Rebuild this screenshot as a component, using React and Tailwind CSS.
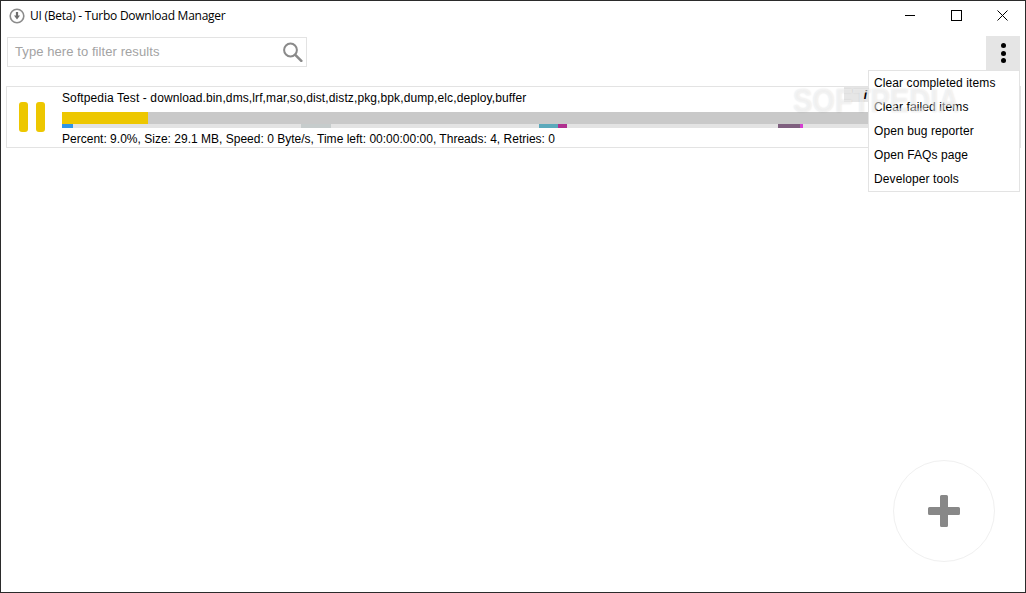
import React from 'react';

const menuItems = ['Clear completed items', 'Clear failed items', 'Open bug reporter', 'Open FAQs page', 'Developer tools'];

const App = () => {
  return (
    <div className="relative w-[1026px] h-[593px] overflow-hidden bg-white border border-[#2b2b2b] font-['Liberation_Sans',sans-serif] text-black">
      {/* title bar */}
      <div className="flex items-center h-[29px] pl-2">
        <svg width="16" height="16" viewBox="0 0 16 16" className="shrink-0">
          <circle cx="8" cy="8" r="6.8" fill="none" stroke="#8c8c8c" strokeWidth="1.6" />
          <path d="M6.9 4h2.2v3.6h1.9L8 11.6 5 7.6h1.9z" fill="#6e6e6e" />
        </svg>
        <span className="ml-[5px] text-xs font-['Open_Sans',sans-serif] tracking-[-0.25px]">UI (Beta) - Turbo Download Manager</span>
        <div className="ml-auto flex items-center h-full">
          <div className="w-[46px] flex justify-center"><div className="w-[10px] h-px bg-black" /></div>
          <div className="w-[46px] flex justify-center"><div className="w-[11px] h-[11px] border border-black" /></div>
          <div className="w-[46px] flex justify-center">
            <svg width="11" height="11" viewBox="0 0 11 11">
              <path d="M.5.5l10 10M10.5.5l-10 10" stroke="#000" strokeWidth="1" fill="none" />
            </svg>
          </div>
        </div>
      </div>

      {/* toolbar */}
      <div className="flex items-start justify-between h-[56px] pl-[6px] pr-[5px] pt-[7px]">
        <div className="flex items-center justify-between w-[300px] h-[30px] border border-[#e3e3e3] pl-[7px] pr-[3px]">
          <span className="text-[13px] tracking-[0.08px] text-[#a3a3a3]">Type here to filter results</span>
          <svg width="20" height="20" viewBox="0 0 20 20" fill="none" stroke="#8a8a8a">
            <circle cx="7.5" cy="8" r="6.4" strokeWidth="2" />
            <path d="M12.3 12.8l6 6" strokeWidth="2.6" strokeLinecap="round" />
          </svg>
        </div>
        <div className="flex flex-col items-center justify-center gap-[2.5px] w-[34px] h-[34px] -mt-px bg-[#e5e5e5]">
          <div className="w-[5px] h-[5px] rounded-full bg-black" />
          <div className="w-[5px] h-[5px] rounded-full bg-black" />
          <div className="w-[5px] h-[5px] rounded-full bg-black" />
        </div>
      </div>

      {/* download item */}
      <div className="relative flex ml-[5px] mr-[4px] h-[62px] border border-[#e3e3e3]">
        <div className="flex items-center gap-2 w-[55px] pl-3 shrink-0">
          <div className="w-[9px] h-[30px] rounded-[3px] bg-[#edc700]" />
          <div className="w-[9px] h-[30px] rounded-[3px] bg-[#edc700]" />
        </div>
        <div className="flex-1 flex flex-col min-w-0 pt-[4px]">
          <div className="text-xs tracking-[0.11px] leading-[14px] h-[21px]">Softpedia Test - download.bin,dms,lrf,mar,so,dist,distz,pkg,bpk,dump,elc,deploy,buffer</div>
          <div className="flex h-3 bg-[#c9c9c9]">
            <div className="w-[86px] bg-[#edc700]" />
          </div>
          <div className="flex h-1 bg-[#e3e3e3]">
            <div className="w-[11px] bg-[#2f96e8]" />
            <div className="w-[228px]" />
            <div className="w-[30px] bg-[#c6cccc]" />
            <div className="w-[208px]" />
            <div className="w-[19px] bg-[#5ba9bb]" />
            <div className="w-[9px] bg-[#b0308f]" />
            <div className="w-[211px]" />
            <div className="w-[22px] bg-[#7f5f7f]" />
            <div className="w-[3px] bg-[#d43fd0]" />
          </div>
          <div className="text-xs tracking-[0.01px] leading-[14px] mt-1">Percent: 9.0%, Size: 29.1 MB, Speed: 0 Byte/s, Time left: 00:00:00:00, Threads: 4, Retries: 0</div>
        </div>
        <div className="absolute top-0 left-[837px] w-[26px] h-[15px] bg-[#e6e6e6] flex items-center justify-end pr-[3px]">
          <span className="text-xs font-bold italic leading-none">i</span>
        </div>
      </div>

      {/* dropdown menu */}
      <div className="absolute top-[69px] left-[867px] w-[152px] h-[122px] bg-white border border-[#e3e3e3]">
        {menuItems.map((item) => (
          <div key={item} className="h-6 flex items-center pl-[5px] text-xs tracking-[0.1px]">{item}</div>
        ))}
      </div>

      {/* softpedia watermark sits over the menu too */}
      <div className="absolute top-[82px] left-[792px] origin-left scale-x-[0.88] text-[33px] font-bold leading-[36px] text-white/50 [text-shadow:0_0_2px_rgba(0,0,0,0.12)] pointer-events-none">SOFTPEDIA</div>

      {/* add button */}
      <div className="absolute top-[459px] left-[892px] flex items-center justify-center w-[102px] h-[102px] rounded-full bg-white border border-[#f0f0f0]">
        <svg width="32" height="32" viewBox="0 0 32 32">
          <path d="M12 1.500A1.500 1.500 0 0 1 13.500 0h5A1.500 1.500 0 0 1 20 1.500V12h10.500a1.500 1.500 0 0 1 1.500 1.500v5a1.500 1.500 0 0 1-1.500 1.500H20v10.500a1.500 1.500 0 0 1-1.500 1.500h-5a1.500 1.500 0 0 1-1.500-1.500V20H1.500A1.500 1.500 0 0 1 0 18.500v-5A1.500 1.500 0 0 1 1.500 12H12z" fill="#888888" />
        </svg>
      </div>
    </div>
  );
};

export default App;
